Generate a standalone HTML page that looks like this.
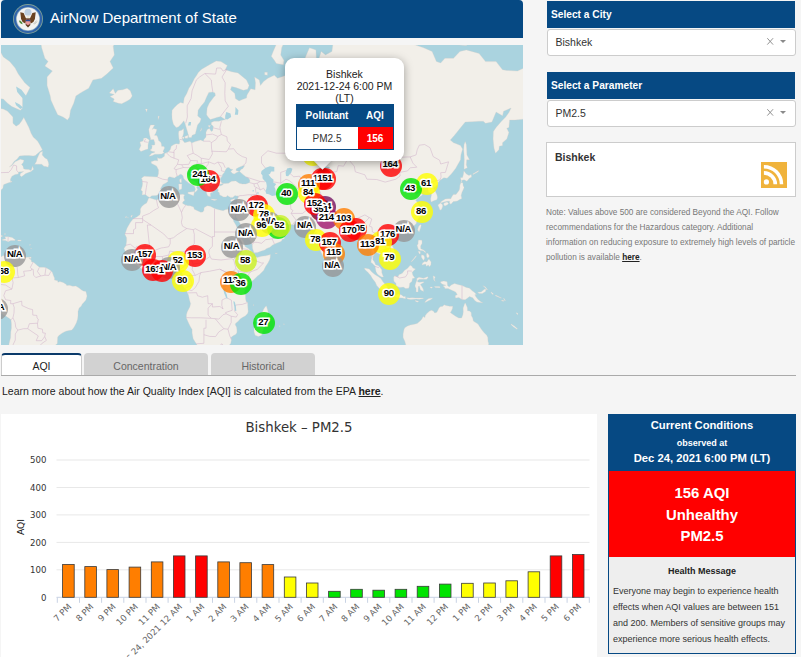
<!DOCTYPE html>
<html lang="en">
<head>
<meta charset="utf-8">
<title>AirNow Department of State</title>
<style>
*{box-sizing:border-box;margin:0;padding:0}
html,body{width:801px;height:657px;overflow:hidden;background:#f5f5f5;font-family:"Liberation Sans",Arial,sans-serif;color:#222}
.abs{position:absolute}
#hdr{left:1px;top:0;width:522px;height:37.8px;background:#064983;border-radius:4px 4px 0 0;color:#fff;font-size:15px;line-height:38px}
#hdr span{position:absolute;left:49px;top:-1px;white-space:nowrap}
#map{left:1px;top:45px;width:522px;height:300px;background:#aad3df;overflow:hidden}
.mk{position:absolute;width:22px;height:22px;border-radius:50%;opacity:.8;text-align:center;line-height:22px;font-size:9.3px;color:#000;white-space:nowrap}
.ml{position:absolute;width:40px;height:22px;text-align:center;line-height:22.5px;font-size:9.6px;font-weight:bold;color:#000;white-space:nowrap;-webkit-text-stroke:3.2px #fff;paint-order:stroke fill;letter-spacing:-0.35px}
#pop{left:285px;top:13px;width:119px;height:103px;background:#fff;border-radius:9px;box-shadow:0 2px 10px rgba(0,0,0,.35);text-align:center;font-size:10.5px;line-height:11.7px;color:#222;padding-top:11.3px}
#tip{left:315.5px;top:109px;width:13px;height:13px;background:#fff;transform:rotate(45deg);box-shadow:2px 2px 5px rgba(0,0,0,.25)}
#ptab{left:295.5px;top:59px;width:98px;height:46px;border:1px solid #064983;background:#fff;font-size:10px}
#ptab div{position:absolute;text-align:center;line-height:21px}
.bar{left:547px;width:248px;height:27px;background:#064983;color:#fff;font-size:10.2px;font-weight:bold;line-height:27px;padding-left:4px}
.sel{left:546.5px;width:249px;height:26.5px;background:#fff;border:1px solid #ccc;border-radius:3px;font-size:10.5px;line-height:25px;padding-left:8px;color:#333}
.sel .x{position:absolute;left:219px;top:8.2px;width:6.4px;height:6.8px;overflow:visible}
.sel .ar{position:absolute;left:232.4px;top:10px;width:0;height:0;border-left:3.5px solid transparent;border-right:3.5px solid transparent;border-top:3.6px solid #8a8a8a}
#city{left:546px;top:142px;width:250px;height:54.5px;background:#fff;border:1px solid #ccc;font-size:10.5px;font-weight:bold;padding:7.5px 0 0 8px;color:#333}
#rss{left:761px;top:162px;width:26px;height:26px}
#note{left:546px;top:206px;width:255px;font-size:8.25px;line-height:14.9px;color:#777;white-space:nowrap}
#note a{color:#222;font-weight:bold;text-decoration:underline}
.tab{top:353px;height:22px;font-size:10.5px;text-align:center;line-height:25px;border-radius:4px 4px 0 0}
#t1{left:1px;width:81px;background:#fff;border:1px solid #ccc;border-top:2px solid #0a3a6a;border-bottom:none;color:#222;line-height:22px;height:23px}
#t2{left:84px;width:124px;background:#d2d2d2;color:#666;line-height:27px}
#t3{left:211px;width:104px;background:#d2d2d2;color:#666;line-height:27px}
#tline{left:1px;top:375px;width:795px;height:1px;background:#aaa}
#learn{left:2px;top:385px;font-size:10.5px;color:#222;white-space:nowrap}
#learn a{color:#222;font-weight:bold;text-decoration:underline}
#chart{left:1px;top:414px;width:596.4px;height:243px;background:#fff;overflow:hidden}
#cc{left:608px;top:414px;width:188px;height:240px;background:#eee;border:1px solid #064983;text-align:center}
#cc .h{background:#064983;color:#fff;font-weight:bold;height:55.5px;font-size:11.25px;line-height:15.6px;padding-top:3.4px}
#cc .r{background:#ff0000;color:#fff;font-weight:bold;height:86.8px;font-size:14.9px;line-height:21.5px;padding-top:12.5px}
#cc .hm{font-weight:bold;font-size:9px;margin-top:8.7px;color:#222}
#cc .tx{font-size:9px;line-height:16px;text-align:left;padding:7px 0 0 4px;color:#333;white-space:nowrap}
</style>
</head>
<body>
<div id="hdr" class="abs"><span>AirNow Department of State</span>
<svg class="abs" style="left:12px;top:3.9px" width="30" height="30" viewBox="0 0 30 30">
<circle cx="15" cy="15" r="15" fill="#7d9f96"/>
<circle cx="15" cy="15" r="14.1" fill="#2f63aa"/>
<circle cx="15" cy="15" r="12" fill="#8fb0c4"/>
<circle cx="15" cy="15" r="11.3" fill="#f3f3f1"/>
<circle cx="15" cy="8.2" r="3.5" fill="#bdd0e0"/>
<path d="M7.3 8.2 L10.6 9 L12.6 13.5 L13.6 15.6 L12.2 19.6 L9.6 18 L8.1 15 Z" fill="#6a4320"/>
<path d="M22.7 8.2 L19.4 9 L17.4 13.5 L16.4 15.6 L17.8 19.6 L20.4 18 L21.9 15 Z" fill="#6a4320"/>
<path d="M13.4 14 L16.6 14 L17.4 21 L15 23.6 L12.6 21 Z" fill="#5a3a1e"/>
<circle cx="15" cy="13" r="1.5" fill="#efe9d8"/>
<path d="M12.7 15.8 H17.3 V18.6 Q17.3 20.4 15 21.2 Q12.7 20.4 12.7 18.6 Z" fill="#e27078"/>
<rect x="12.7" y="15.8" width="4.6" height="1.5" fill="#2c4c94"/>
<path d="M13.85 17.3 V20.5 M15 17.3 V21.1 M16.15 17.3 V20.5" stroke="#f6e9e9" stroke-width="0.45"/>
<path d="M6.2 16.4 Q7.4 16.2 8.2 17.6 Q9.4 18.4 9.6 20.2 Q7.8 20.2 6.9 18.8 Q6 17.6 6.2 16.4Z" fill="#4e8a3c"/>
<path d="M20.6 20 L23.6 16.6 M21.4 20.4 L24 17.6" stroke="#a9a9a0" stroke-width="0.6"/>
</svg>
</div>
<div id="map" class="abs"><div class="abs" style="left:-1px;top:0;width:523px;height:300px">
<svg class="abs" style="left:0;top:0" width="523" height="300" viewBox="0 0 523 300">
<rect width="523" height="300" fill="#aad3df"/>
<path d="M148.6 153.2L149.9 152.9L154.8 154.5L156.9 155L159.1 153.5L161.4 152.7L164.4 151.1L167.6 150.6L171.9 150.6L176.1 150L180.4 149.5L183 149.2L184.7 150L183.8 151.6L183.8 153.2L184.7 155.3L182.7 157.1L182.7 158.4L184.9 159.7L187.9 160.7L190 160.7L193.6 162L194.3 164.2L197.5 165.7L200.7 167.2L202.8 167L203.9 165.5L204.1 162.7L207.1 160.7L210.3 161.2L214.5 163.5L218.8 164.7L223.1 165.7L225.2 164.7L227.3 164.2L230.1 164.7L232.7 165.2L234.4 164.5L235.7 169.2L234.6 172.6L234.2 173.3L232.7 171.6L231.2 169.2L230.7 168L230.7 168.9L232.7 172.8L233.7 176.4L235.9 180L236.9 182.3L237.4 184.7L240.1 188.1L240.6 192.4L243.3 196.1L245 201.4L248.7 203.8L251.9 207.1L253.6 208.2L253.4 210.2L254 210.8L257.2 212.6L261.5 211.3L265.7 210.8L270.4 209.5L270.2 212.6L269.6 214.7L267.9 218L265.7 221.2L263.6 225.5L259.3 229.8L257.8 230.8L254 234.5L250.8 237.2L248.7 239.4L247 241.5L245.9 243.6L244.8 245.8L244 248.4L245.5 250.1L245.5 253.3L246.1 256.5L247.6 257.6L247.8 262L248.2 266.4L247.6 268.6L245.5 270.8L242.3 272.6L240.1 274.1L238 276.4L235.7 278.2L235.2 279.8L236.5 282.1L236.9 284.4L236.9 287.4L235.9 289.3L232.7 290.9L231 292.6L231.4 295L230.7 298.6L228.4 301L227.3 302.2L225.2 306L220.9 309.7L216 312.3L208.1 313.1L203.9 314.4L200.7 313.1L200 309.7L200.2 307.2L198.5 303.5L197 299.8L194.7 296.2L193.2 293.8L192.1 287.9L192.1 284.4L190 280.9L187.9 276.4L186.4 273L186.4 269.7L187.4 266.4L189.8 262L190.6 258.7L189.4 254.4L188.5 250.1L187.4 247.9L186.4 245.1L184.7 243.2L181.7 240L180.4 237.2L181 234.5L181.9 233L182.1 230.2L182.1 228.3L181.5 226.6L179.3 225.3L176.1 225.7L174 225.9L171.9 223.3L170.8 221.6L168.5 221.4L165.5 221.6L163.3 222.3L161.2 222.9L159.1 224L156.9 224.8L154.8 224.2L152.7 224L148.4 224.8L145.2 225.7L142 224L138.2 221.6L136.7 220.3L134.5 219.1L133 216.9L132.8 215.4L132 214.7L130.3 212.6L129.2 211.5L127.9 209.7L125.6 208.4L125.4 206.5L123.9 203.4L126 200.5L126.6 196.1L126.6 192.7L124.9 189.3L127.1 183L130.3 177.6L133 174L136.7 172.1L139.9 169.7L140.5 167L140.3 164.2L141.6 161.7L144.1 159.4L145 158.9L146.7 157.9L148 154.8ZM266.4 260.9L268.3 267.5L267.9 269.2L266.8 273L266.2 275.3L264.7 279.8L263.2 285.1L261.5 290.2L258.3 291.4L255.1 290.2L254 286.7L254 283.2L255.7 278.7L255.5 275.3L255.1 271.9L256.8 270.1L260 269L262.5 267L263.6 264.2L265.3 261.8ZM149.7 152.4L147.8 151.4L145.4 149.5L142.2 150L142.4 146L140.9 145.2L142.2 141.3L142.6 138.5L142.2 134.8L141.4 133.3L144.1 131.2L148.4 131.5L153.1 131.8L157.4 132.1L158.4 128.9L158.6 124.9L156.5 120.9L151.6 118.4L151 116.8L154.8 115.5L157.8 115.8L157.4 112.6L158.9 113.5L161.6 113.2L164.4 111.2L164.6 108.5L168 107.2L170.2 104.8L171.2 101.3L174 99.5L176.1 98.8L179.3 99.1L179.8 96.6L178.9 93.3L178.5 88.3L178.9 86L181.7 85.2L183.6 83.6L183.6 88.3L183 90.6L181.9 92.9L182.5 95.1L184.7 97.7L187.2 97L190 96.2L191.7 98.1L195.3 96.6L200.7 95.1L203.4 96.2L203.9 94.4L206 92.1L206 87.2L207.3 84.4L209.4 83.6L211.3 86.4L212.8 85.6L213.3 81.2L211.3 79.6L211.3 77.5L214.1 76.2L218.8 76.2L221.4 75.4L225.6 74.6L223.1 73.3L220.9 71.5L216.7 72.4L214.5 73.3L210.3 74.6L208.1 72L206.6 69.8L207.1 63L209.2 58.3L213.5 52.5L215.4 50.5L215 47.9L212.8 46.9L208.8 47.4L206.6 52L204.5 56.9L200.7 61.6L198.1 65.3L197.7 71.1L201.1 73.7L200 77.1L197.5 80L196.4 84.4L195.3 89.1L192.1 90.3L191.5 92.5L188.7 92.5L188.3 89.5L186.8 84.4L185.1 78.7L183.8 75.8L181.5 78.7L178.3 82L176.1 82.4L173.4 79.2L172.1 74.1L171.9 69.8L172.1 65.3L174.4 62.6L177.2 59.8L180.4 57.4L183.4 58.3L184.2 53L186.8 48.4L188.9 43.2L191.9 38.8L194.3 33.7L196.4 30.8L198.5 27.3L201.7 24.2L206 21.7L210.3 19.2L216.2 15.9L220.9 16.6L227.3 20.5L225.2 24.8L231.6 26.7L238 27.9L246.5 34.9L249.1 40.5L247.6 44.2L243.3 45.3L235.9 42.6L231.6 41.6L230.5 44.8L234.8 48.4L235.4 53.5L239.1 55.9L242.3 54.5L246.5 53L247 50L250.8 43.7L255.1 44.8L255.5 37.7L254.6 32L259.3 34.9L260.4 40.5L263.6 36.6L267.9 33.2L274.3 30.3L277.5 33.2L282.8 31.4L289.2 29.1L290.3 24.2L297.7 27.3L302 29.1L306.3 32L304.1 26.1L303.7 16.6L307.3 7.8L309.5 2.8L315.9 4.9L316.5 16.6L314.8 29.1L318 37.7L314.8 44.2L319.1 38.8L320.8 29.1L318 16.6L321.2 6.4L325.5 9.9L331.9 6.4L333.1 -1.7L344.7 -4.7L374.5 -25.7L383.1 -37.2L395.9 -27.6L402.3 -12.7L403.3 -0.9L412.9 -0.9L423.6 2.8L432.1 6.4L436.4 16.6L440.7 17.9L444.9 13.3L453.5 13.3L459.9 6.4L466.3 4.9L479.1 8.5L485.5 16.6L496.1 16.6L502.5 24.8L506.8 25.4L517.5 26.1L523.9 23L526 29.1L545.2 29.1L545.2 65.3L523.9 74.1L515.3 75L509.6 75L508.9 82.4L506.8 83.2L508.9 87.6L506.8 94L502.5 97.7L502.5 100.6L499.3 101.3L498.9 104.8L495.5 108.2L494 103L493.1 94L493.4 86.4L496.1 82.4L501.5 76.2L505.7 72L508.9 67.6L511.1 63L503.6 66.2L502.5 70.7L496.1 67.1L491.9 77.1L485.5 78.3L483.3 76.2L479.1 76.2L471.6 76.7L465.2 77.1L459.9 83.6L454.5 90.3L450.3 95.1L453.5 97.7L455.6 98.4L460.5 100.6L462.6 104.1L460.9 109.9L460.5 114.8L457.7 119.7L455.6 123.4L451.3 128.9L447.1 133.3L443.9 132.7L440 135.3L438.1 137.6L437.9 139.6L435.3 141.8L433.2 143.2L435.1 145.7L437 150L437.5 152.7L436.8 154.8L434.3 155.6L431.1 156.9L430.6 154L431.3 150.6L431.5 148.2L428.5 147.3L427.9 143.2L426.6 141.8L422.5 143.2L420 144.9L421.5 140.5L419.3 139.3L416.1 142.4L412.9 144.1L412.3 146L414.6 147.9L416.1 149.5L418.9 147.9L422.5 149L422.1 150.3L418.3 152.4L415.7 155.3L417.8 157.9L419.1 161L421 163.5L421.3 165.7L419.3 166.7L421.5 168.2L420.6 171.6L418.7 172.8L416.8 176.4L416.1 178.8L414 180.7L412.9 181.4L410.8 183.5L408.7 184.9L405 186L403.3 186.5L400.1 187.7L396.9 188.8L396.5 190.9L395.4 188.3L392.7 187.7L390.5 188.6L389 189.9L386.9 192.7L386.9 194.5L388.4 196.7L390.5 199.2L392.2 200.3L393.7 203.8L394.4 207.1L394.2 209.7L392 211.5L389.5 212.8L388.8 214.5L385.6 216.5L384.8 214.1L384.1 212.8L382.2 212.4L380.7 210L379.2 208.7L376.7 207.8L376.5 206.2L375.6 206L374.5 206.5L374.3 209.3L373 211.5L372.8 214.7L374.5 216.9L375.6 219.7L378.2 220.6L379.9 222.3L381.8 224.8L381.8 227.6L382.6 229.8L383.5 232.1L381.6 231.9L378.8 230.2L377.3 228.9L376 226.6L375.4 223.3L375.2 221.2L373.9 220.1L372 218L370.9 217.5L371.3 214.7L371.5 212.6L371.8 209.3L370.7 206L369.8 202.7L369.4 199.4L367.7 198.3L366 199.4L364.5 201L362.4 200.5L362.8 197.2L362.4 194.5L360.9 192L359.2 191.1L357.9 189.3L357 186.3L354.9 185.8L353.8 187.2L351.1 187.4L349.4 187.7L346.8 188.1L346.6 189.7L345.3 191.5L343.2 192.2L340.4 194.9L338.9 196.7L336.8 199L334.4 200.7L332.3 201.6L332.1 204.9L332.5 206.9L331.7 209.3L331.4 213L330.2 213.2L329.7 215.2L328 216L326.5 217.8L325 216.5L324 213.9L322.9 210.8L321 207.3L319.7 203.8L318.6 201.6L317.6 198.3L316.7 194L316.3 191.5L316.5 189L316.1 186.5L315.2 188.1L312.7 189.7L311.2 189.3L308.4 186.3L310.5 185.6L311.2 184.7L308 184L306.7 183L305 181.6L304.1 180.5L303.3 179.3L298.8 179.5L294.1 179.8L292.4 179.8L287.1 179L283.4 178.1L282.4 175L278.5 176L275.3 175.7L273.2 173.8L271.1 173.1L269.6 170.7L268.3 168L265.7 167L264.7 168L263.6 168.4L263.6 169.7L264.9 172.1L266.8 174.5L268.1 176.2L268.3 178.3L269.6 180.5L270.4 178.8L270.6 177.4L271.3 179.5L270.9 180.9L273.2 181.9L276.4 182.1L277.5 181.2L279.2 179.3L280.9 177.4L281.5 176.9L281.5 180L282.2 181.6L284.9 183L286.2 183.3L288.8 185.8L287.1 188.8L286.2 190.6L284.5 191.1L284.3 193.8L282.4 194.3L281.3 196.3L279 197.2L276.4 198.3L272.6 200.1L270 202.3L266.8 203.4L264.7 204.9L261.5 206L257.4 207.6L254.2 207.8L253.4 206L252.5 203.2L252.3 200.1L251.4 197.6L249.3 194.5L247.6 192L245.7 189.7L244.6 188.1L244 184.7L241.8 181.9L240.3 178.8L238.4 175.7L236.7 172.8L235.7 172.6L235.8 169.2L234.4 164.5L235.2 162.7L235.9 161L236.9 158.1L237.6 154L238 152.7L238.4 150.8L236.9 151.1L235 150.6L232.7 152.4L230.5 152.4L227.3 150.6L226.3 151.9L223.5 151.9L221.4 150.8L219.7 150L219.2 147.6L217.7 146.5L218.4 144.9L217.1 143.2L217.1 141.8L218.8 140.7L220.9 140.7L223.1 139.6L223.3 138.5L225.2 138.5L228.4 138.2L231.6 136.2L235.9 135.9L239.1 138.2L242.3 139L245.9 139L249.7 137.6L249.9 135.3L248.7 133.3L245.5 131.5L242.3 128.9L240.8 127.4L239.5 126.5L241.2 124.3L242.7 123.7L244.8 120.6L242.3 120.9L239.1 122.2L236.3 123.7L235.9 125.5L239.1 126.5L236.7 127.4L234.2 128.9L232.7 128.6L230.7 126.5L232.9 124.6L230.5 124L229 122.5L226.9 122.8L224.8 125.9L224.3 127.4L222.4 129.8L222 131.8L220.7 132.7L220.3 134.8L220.9 136.2L221.4 137.6L223.1 138.5L220.9 139L219.4 139.6L218.2 140.7L216.9 140.2L216.7 139.3L214.5 139.3L212.4 139.6L212 141.3L210.1 140.5L209.4 141.8L210.3 144.1L210.9 145.4L212.4 146.8L212.4 148.2L211.1 147.6L210.3 148.7L210.7 151.4L209 151.4L207.5 150.6L206.6 148.2L206.4 146.5L205.6 144.9L204.3 143L202.6 140.7L202.6 137.6L201.7 135.6L200 134.5L196.4 131.8L193.6 129.8L192.8 127.1L191.7 126.5L190.6 127.7L190.2 125.5L187.7 126.2L187.4 128.9L190 131.5L191.7 135L195.3 136.5L197 138.5L200.7 141.6L200.7 142.4L197.7 140.5L196.6 142.4L197.7 144.6L196.4 146.3L194.7 147.5L194.9 145.4L195.5 144.3L194.5 141.6L192.8 140.2L191.5 139.6L188.9 138.2L187.2 136.8L184.7 134.8L183.6 133.3L183 130.7L181.5 129.5L180.2 129.2L178.3 130.7L176.8 131.2L174.4 133L172.5 132.4L169.7 131.8L168 132.7L167.8 135L168 136.5L165.9 137.9L162.9 139.6L161.2 142.4L160.6 143.5L161.6 145.4L160.1 146.5L159.5 148.4L157.4 150L156.3 150.6L151.8 150.8ZM149 111.2L152.2 110.6L154.8 109.2L158 109.2L161.8 109.1L164.2 107.5L162.9 106.5L164.6 103L164 101.6L161.6 101.3L161.4 99.1L160.8 97.3L158.6 95.5L157.8 92.5L156.9 90.6L154.4 90.3L155.7 88.3L156.9 84.4L153.7 83.6L152.2 84.4L154.6 80L150.5 80L148.8 84.4L149.3 88.3L149.9 91L150.7 94L150.3 94.8L153.7 94.4L154.8 97.7L154.8 99.9L151.6 100.2L152.2 101.6L151.6 104.1L149.9 105.1L152 106.2L154.8 106.8L154.4 107.5L151.6 108.2ZM148 100.2L148 104.1L145.2 104.8L140.9 106.5L139.2 104.4L140.9 100.6L139.9 97L143.1 95.9L143.7 93.3L146.3 92.9L149.3 95.1L148.4 97.7ZM113.2 56.4L118.5 58.3L121.7 58.8L127.1 55.9L130.3 54L132.2 51L130.3 45.8L127.1 43.2L122.8 44.8L117.9 45.3L115.3 48.4L113.2 43.7L109.4 47.9L114.3 49.4L110 51.5L114.3 54ZM37.5 -21.3L41.7 2.8L44.9 13.3L48.1 16.6L44.9 21.1L52.4 26.1L47.1 32L47.1 40.5L50.3 51L50.9 54.9L54.5 63L57.7 69.8L63.1 72L67.5 75L69.5 72L70.5 65.3L73.7 58.3L75.9 51L81.2 47.4L88.7 43.2L92.9 34.9L101.5 33.2L106.8 29.1L113.2 23L110 16.6L114.3 9.9L113.2 1.3L118.5 -8.7L120.7 -40.3L75.9 -90.1L33.2 -62.7ZM-20.1 -4.7L-9.5 -2.4L-0.9 4.2L3.3 11.9L9.7 16.6L15.1 23L18.3 29.1L24.7 37.7L30 42.6L25.7 51L22.5 53.5L22.5 63L20.4 65.3L11.9 61.6L7.6 58.3L3.3 54L-5.2 53.5L-20.1 45.8ZM-20.1 63L-3.1 63L3.3 64L7.6 66.2L10.8 69.8L12.9 72L12.9 78.3L16.1 81.2L19.3 79.2L21.5 76.2L23.8 72.4L28.9 82.4L31.1 88.3L33.2 92.1L37.5 95.9L39.6 99.5L42.4 104.8L39.6 106.8L35.3 110.6L33.2 110.9L28.9 110.6L24.7 110.6L19.5 110.9L17.2 113.9L14 116.5L11.9 119.7L9.3 121.9L11.9 120.6L15.1 116.8L20.4 114.2L24 115.2L23 118.1L21.5 119.3L23 121.2L23.6 123.7L25.1 124.3L28.9 124.6L31.1 125.5L32.6 121.2L33.6 124.3L31.1 126.5L25.7 128.6L21.5 131.8L20 130.4L20.4 128.6L23.6 126.5L21.5 126.8L18.3 127.1L18.3 128.9L15.1 129.5L11.9 131.2L10.4 134.2L10.6 136.5L11.9 136.2L11.9 137.1L9.1 137.6L6.5 138.5L3.8 139.6L3.3 140.7L2.9 143.2L1.4 144.6L0.8 146L-0.1 148.7L-0.9 150.3L0.1 154.5L-2 156.1L-20.1 168ZM42.6 106.2L42.2 109.9L44.9 112.9L47.1 114.2L48.1 116.5L48.8 119.3L48.1 122.2L46 121.5L43.9 121.2L41.7 119.3L38.5 119.3L34.7 119.3L36.4 116.5L37 113.9L38.5 110.6L40 107.5ZM-30.8 211.9L0.1 212.8L1.6 211.5L2.9 210.8L5.5 210.4L7.2 208.9L8.2 208.4L9.1 209.7L7.8 211.1L8.7 211.7L11.4 210.2L11.9 208.9L12.7 210.4L15.5 211.5L16.1 212.6L20.4 212.4L22.5 213.4L24.7 212.6L28.9 212.1L29.1 213.7L31.1 214.7L31.5 216.7L33.6 217.3L36.4 219.7L37.5 220.8L39.6 222.3L43.9 222.3L46 222.7L49.2 224.4L51.1 225.9L52.4 227.6L53.5 230.8L54.5 233L54.5 235.1L57.7 235.7L57.9 237.2L59.9 236.6L63.1 237.4L66.3 239.4L66.7 240.6L69.5 240.2L72.7 241.3L75.9 241.1L79.1 243L81.6 245.1L83.3 246L85.9 246.4L86.5 249L87 251.1L86.7 252.2L85.9 255L83.8 257.4L82.3 259.1L81.2 261.3L79.1 263.1L78 266.4L78 270.8L77.6 274.1L76.5 277.5L75.4 279.8L73.7 282.8L71.8 285.1L69 285.5L65.8 286.2L62.4 287.9L59.2 290.2L57.7 292.1L57.5 295L57.3 298.6L55 300.5L53.5 303.5L53.5 328.4L8.5 328.4L8.5 309.7L8.7 302.2L9.1 298.6L10.6 292.6L10.8 286.9L11.4 283.2L11.4 278.7L11 274.8L9.1 273.3L6.5 271.5L3.3 269.7L0.8 268.4L-1.4 264.8L-3.5 260.9L-5.2 257.6L-7.3 252.7L-30.8 252.2ZM2.3 195.2L5.5 195.6L8.2 196.7L10.8 195.4L14.9 195.6L15.3 194.7L12.1 192.4L8.2 191.8L4.8 191.8L5.9 193.8L2.5 194.5ZM17.8 194.9L21.3 195.2L20.8 196.1L17.8 196.1ZM29.1 212.1L31.1 211.9L31.1 213.4L29.1 213.4ZM-5.2 189.3L-3.1 189.7L0.1 189.9L2.9 191.1L1.2 191.8L-4.1 191.8L-5.2 190.4ZM-5.8 195.2L-1.6 195.6L-1.6 196.3L-5.8 195.8ZM331.9 214.1L334.4 216.9L335.9 219.5L335.1 221.4L332.9 222.5L331.7 221.2L331.4 218ZM437.9 159.9L440.5 158.1L442.2 159.2L442.8 161L441.7 164.2L440 165.2L439 162.5ZM440.7 157.9L443.9 157.1L447.1 156.3L449.6 156.3L449.4 158.1L450.9 159.2L453.3 156.6L456 156.3L457.3 156.1L459.2 154.8L461.8 153.5L461.1 150.6L462 147.3L463.3 144.6L464.1 142.4L463.1 140.5L462.9 137.9L461.6 137.6L460.5 138.5L459.9 140.5L459.7 143.2L459.2 145.2L457.7 147.3L456 149.5L453.5 149.5L454.1 148.7L452.8 150.3L451.5 152.2L450.9 153.7L448.1 153.7L445.4 154L442.8 155.6L440.7 156.9ZM443.9 158.1L447.1 157.1L448.6 158.4L447.5 159.7L444.9 161L443.7 159.7ZM460.5 137.6L462 136.8L460.9 134.8L460.5 132.7L462.6 132.4L463.5 128.9L463.9 125.9L466.3 128.9L469 130.4L471.2 129.5L471.6 132.1L469.3 133.3L466.9 136.2L464.1 134.8L462 135.3ZM464.1 124.3L467.3 122.8L466.3 119.7L466.7 114.8L469.5 114.8L466.9 109.9L466.7 104.8L466.3 99.5L465.2 96.6L464.1 99.5L463.7 104.8L464.1 109.9L464.3 114.8L464.1 119.7ZM420.4 179.5L421.3 180.5L420.4 183.5L419.1 187L417.6 184.7L418.7 181.2ZM396.5 191.5L398 192.2L396.9 194.5L394.8 195.6L393.1 194.3L393.7 192ZM418.5 194.9L421.9 195.2L422.1 198.3L420.6 201L420.8 203.8L423.6 204.9L425.7 207.1L425.3 207.8L423.2 205.8L420.4 205.6L418.5 204.5L417.8 202.7L417 200.1L418.1 199.2L418.1 196.9ZM428.9 214.1L431.1 216.9L430.9 220.1L429.1 221.8L428.5 220.1L426.2 221.2L425.7 219.1L421.9 220.1L422.5 218L424.7 216.5L426.8 216.9ZM427.9 208.2L429.4 211.1L427.9 213.2L426.6 211.5L426.4 208.4ZM421.5 209.7L424 210.4L424.7 213L423.6 215.4L422.3 213.7L421.3 211.9ZM411.2 217.1L412.9 215.4L415.5 212.6L416.6 210.8L415.7 211.1L413.6 213.7L411.2 216.5ZM418.1 206.2L420.2 206.5L420.4 208.4L419.3 208.9ZM393.7 231.9L395 230.8L398 231.9L398.9 229.8L402.3 228.3L404.4 225.5L407.6 223.3L410.2 220.3L411.9 221.2L412.9 222.9L415.5 224L413.4 225.9L412.1 227.6L412.9 230.2L414.9 233L412.5 233.6L411.9 236.6L409.7 238.3L409.3 241.5L408.7 243.2L405.7 243.6L403.3 242.1L399.7 242.4L396.3 241.1L395.9 238.3L393.9 236.2L393.7 234ZM364.5 223.1L369.2 224L371.8 227L375.2 229.8L377.7 231.3L380.9 233.6L382.6 236.2L384.1 238.3L387.3 241.5L387.1 244.7L386.9 247.5L384.3 247.5L382 245.4L379.4 243.4L376.7 240.4L375.2 237L372.4 233.6L370.7 230.4L368.1 227.6L364.9 224.4ZM385.6 249.6L387.5 247.7L389.5 247.7L392.7 249L396.9 249.9L398 248.8L401.6 249.9L403.3 251.4L405.5 251.6L405.5 253.7L402.3 252.9L398 252.7L393.7 251.6L390.5 251.6L388.2 250.7ZM406.5 252.7L409.7 252.9L411.9 252.7L415.1 252.9L418.3 252.9L423.2 252.9L423.6 253.5L419.3 254.2L416.1 253.9L410.8 254.4L407.6 253.9ZM424.7 257.2L426.8 254.8L428.9 253.5L432.6 253.1L431.1 254.4L427.9 256.1L425.7 257.2ZM415.1 255.5L418.9 256.3L417.2 257.2L415.1 256.1ZM416.8 233.4L418.9 232.3L423.6 233.2L427.4 231.7L428.3 232.1L426.8 234.2L423.6 234.2L419.3 234.2L417.6 235.5L417.6 237L419.8 237.2L423.2 236.8L424.2 237.2L421.5 238.7L420.4 239.4L422.1 242.1L423.2 244.1L423.6 246.4L422.1 245.8L420.4 244.7L419.3 241.1L418.3 241.5L418.1 245.4L418.1 246.9L416.1 246.9L416.1 243.6L414.9 241.1L415.7 238.3L416.8 235.5ZM433.2 230.8L435.3 231.9L434.3 234L435.3 236.6L433.8 235.1L433.4 233ZM434.3 241.5L439.6 241.5L440.2 242.8L435.3 242.6ZM430.2 241.9L432.6 242.1L431.7 243.2L430.2 242.8ZM440.7 236.8L443.9 236L447.1 236.8L447.5 240.4L449.2 242.1L451.3 240L454.5 238.5L457.7 239.4L462 240.6L466.3 242.4L469.5 243.2L472.2 245.8L474.8 247.7L476.5 249.4L474.8 249.6L475.9 251.8L478 254.4L481.2 257L482.9 257.8L480.1 257.4L476.9 257L474.8 255.5L472.7 252.7L469.5 251.6L467.3 253.3L465.2 254.8L462 254.6L458.8 252.4L455.6 253.1L455.2 250.7L457.3 249.6L455.6 246.9L451.3 244.9L448.1 243.6L444.9 243.6L444.5 242.1L442.8 241.1L446 240.2L443.2 239.6L440.7 238.1ZM477.6 247.3L481.2 246.9L484.4 244.3L486.1 244.3L485.5 246.4L482.3 248.4L479.1 248.6ZM482.9 240.6L485.5 242.1L487.6 244.7L487 244.9L484.4 242.1ZM491.2 246.9L493.6 249L492.5 249.6L491 247.7ZM495.7 250.1L501.5 252.9L501 253.3L495.3 250.7ZM501.7 255L504.2 255.7L503.8 256.3L501.7 255.9ZM503.8 253.1L505.5 255.5L504.9 255.7L503.6 253.7ZM511.1 278.9L514.3 280.9L517.5 283.7L517 284.2L513.6 282.1L510.9 279.6ZM516.6 267.5L518.1 268.8L517.7 269.7L516.4 268.4ZM406.5 302.2L404.8 296.2L403.1 292.6L403.1 289L404 284.4L404.8 282.8L407.6 280.9L410.4 280L414.2 279.3L417.2 278.4L420.4 275.7L421.9 273.9L423.2 271.5L424.9 272.6L425.3 270.4L426.8 268.4L429.6 266.1L431.7 265.3L433.8 266.4L434.7 267.9L436.8 267.3L437.9 265.3L439 262.9L440.2 261.8L442.8 261.3L444.1 259.8L446 260.5L449.6 261.3L452.8 261.3L452.4 263.7L451.1 266.4L450.3 267.5L453 269.5L456 271.5L458.8 273L461.6 273L462.9 269.7L463.3 266.4L463.1 263.1L463.9 260.9L464.6 258.7L465.4 258.1L466.1 259.8L467.3 262.6L467.5 265.7L469.5 265.9L471.2 267.5L471.4 270.8L472.7 273L473.3 275.9L474.8 277.1L478 279.1L479.5 281.4L481.2 283.9L482.9 286.2L484.4 287.9L486.7 290.2L487.8 292.6L488 296.2L488.7 298.6L488.2 302.2L488.2 317.5L406.5 317.5ZM274.3 15.3L276.4 18.5L283.4 19.8L283.9 15.3L280.7 9.9L281.7 2.8L284.9 -4.7L289.2 -12.7L306.3 -30.4L289.2 -30.4L280.7 -12.7L276.4 -0.9L273.2 6.4L271.3 11.2ZM264.7 27.3L267.4 27.3L267.4 30.3L264.7 29.7ZM211.3 154L214.5 154.3L217.3 154.8L214.5 155.4L211.5 154.8ZM230.1 155.3L231.6 154.5L235 153.5L233.7 155.6L231.6 156.3ZM187.9 147.3L194.5 146.5L193.6 150.8L187.9 148.4ZM178.7 139L181.9 139L181.7 144.1L179.1 144.9ZM179.5 134.8L181.3 133.3L181.5 137.6L180 137.6ZM166.3 143L168.5 142.4L167.8 143.8ZM274.9 208L277.5 208.2L276 208.7ZM184.7 91.4L188.1 90.3L187.7 93.3L185.1 93.3ZM182.1 92.1L184.2 92.1L184 93.8L182.5 93.6ZM200 86.4L201.7 82.8L201.3 85.2ZM208.1 80.4L210.7 80.4L209.2 82.4ZM453.5 -16.9L470.5 -21.3L481.2 -14.4L466.3 0.6L457.7 -0.2ZM472.7 128.9L478.6 125.5L478.2 126.8L473.1 129.5ZM125.1 171.9L126.9 171.4L126 172.8ZM127.5 172.6L128.3 172.6L128.1 173.3ZM130.7 171.1L132.4 169.9L131.5 172.4ZM279.2 280.7L280.2 280.9L279.8 281.7ZM283.7 278.7L284.5 279.1L283.9 279.8ZM253.4 259.6L254 260L253.6 260.7ZM244.8 247.5L245.5 247.9L245.3 248.8ZM29.4 199.8L30.6 199.6L30 200.5ZM30.6 203.2L31.5 203.4L31.1 204.1ZM145.4 64L147.3 64L146.7 67.1ZM158 71.1L159.3 71.5L158.4 74.6ZM4 189L5.5 188.6L5.3 189.5Z" fill="#f2efe9" stroke="#d9d0c9" stroke-width="0.3"/>
<path d="M185.7 78.3L187.4 72L187.2 67.6L187.2 60.7L191.1 53.5L192.1 45.8L196.4 34.9L199.6 32L203.9 29.1L204.9 28.5M212.8 46.9L211.8 40.5L211.3 34.9L204.9 28.5L215.6 29.1L216.7 23L220.9 23L223.1 26.1L226.9 24.2M220.5 71.5L225.2 65.3L228.4 61.2L225.2 55.9L224.8 48.4L225.2 37.7L222 32L226.9 24.2M221.4 76.2L219.9 82.4L220.3 85.2L221.4 89.5L226.9 91.8L227.3 95.9L230.5 99.5L228.4 104.1L233.7 103.7L236.9 108.2L242.3 111.6L246.5 112.9L245.9 118.1L242.7 120.9M191.7 98.1L192.3 103L193.2 108.2L187.2 110.6L190.6 115.5M193.2 108.2L197.5 110.6L201.3 113.2L209.2 114.5L212.4 108.9L211.5 103L211.3 97.7L209.8 96.2L203.4 96.2M211.3 97.7L216.2 94.4L217.9 91.4L221.4 89.5M206 89.9L212.4 89.1L217.9 91.4M213 82.8L219.7 84.4M211.5 106.2L218.8 106.5L226.3 106.8L228.4 104.1M157.4 132.1L162.7 134.2L168 135M166.5 107.9L170.2 111.6L174 113.2L178.7 114.8L177.4 119.3M174 123.7L176.1 124.6L179.3 123.7L183.4 122.5L181.7 119.7L177.4 119.3L174 123.7M177.2 131L176.1 127.4L176.1 124.6M176.6 100.2L176.1 104.1L174 105.5L174 108.9L174 113.2M168.5 106.8L174 107.5M181.7 119.7L188.9 119.3L190.6 115.5L197.5 115.8L196.4 121.2L190.4 122.8L183.4 122.5M197.5 118.1L201.3 118.7L208.6 116.8L208.1 119.3L204.5 123.7L201.3 124.6L196.4 122.8M201.3 113.2L201.3 118.7M208.6 116.8L214.3 119L217.9 117.1L221.4 122.8L221.4 125.9L224.3 126.5M217.9 117.1L223.1 118.1L225.2 122.8M222.2 131.2L218.8 130.1L209.6 129.8L206.9 127.7L204.5 123.7M209.6 129.8L209 135.3L210.1 138.2L217.3 137.1L220.9 136.2M217.3 137.1L216.7 139.9M210.1 138.2L205.8 139.3L203.9 142.7M209 135.3L204.9 135.6L202.6 136.5M201.3 124.6L201.7 127.7L202.6 131.8L200.7 134.8M190.4 122.8L190.2 125.5M196.4 122.8L194.5 124.9L190.6 125.9M201.3 124.6L195.3 126.8L194.9 129.8L198.7 133.3M142.2 136.5L147.3 137.1L146.3 142.7L145.6 147.3L145.4 149.5M179.8 94.4L182.3 94.8M145.6 94L144.1 96.6L147.8 97.3M265.7 123.4L261.5 118.1L261.5 111.6L267.9 105.8L276.4 108.2L284.9 108.2L291.3 108.9L291.3 99.5L299.9 96.6L308.4 92.9L312.7 97L319.1 98.8L325.5 100.2L331.9 108.2L338.3 108.2L343.6 112.9L347.4 114.5M347.4 114.5L343.6 121.2L338.3 120.6L336.8 126.5L332.5 127.4L332.3 135.6L325.5 139L318.6 143L321 149.5M347.4 114.5L357.5 108.9L370.3 110.6L371.3 104.8L379.4 107.2L389.5 112.2L395.9 114.2L402.3 112.2L410.2 111.9M348.5 114.5L354.3 121.2L355.3 126.8L364.9 129.8L366.9 134.2L376.7 134.5L385.2 137.1L395.9 134.2L400.1 131L399.7 127.4L407.6 125.9L410.2 122.8L416.8 122.2L412.9 118.1L410.2 111.9M410.2 111.9L416.1 109.9L417.2 104.8L419.3 100.2L424.7 99.5L430 102.7L433.2 111.6L439.6 115.2L440.7 119L448.6 116.8L445.4 127.4L440.7 127.7L441.1 132.1L439.8 135L434.3 136.2L431.9 136.8L426.6 141.8M431.5 147.9L435.1 145.7M391.6 188.1L388.8 185.1L385.8 184L380.9 185.8L379.2 186L377.1 188.8L375 188.1L372.4 187L372 182.1L369.4 181.2L371.8 174L369 172.4M369 172.4L364.9 169.9L357.5 173.3L351.1 174.5L350.6 172.8L342.5 171.6L334 167.5L329.7 165L329.3 161.7L327.6 154L321.2 150M306.7 183L312.7 181.2L310.5 173.3L316.9 168L320.1 165.5L320.1 160.5L321.2 150M331.9 170.9L340.4 174.3L348.9 176.4L350.6 181.6L351.1 187.4M357.9 189.3L358.1 183.5L355.8 182.3L358.1 180L352.8 179.3L350 176.7M358.1 188.6L360.2 184.7L363.2 178.8L368.1 174L369 172.4M371.5 213.7L372.8 209.7L370.7 202.7L371.8 199.8L369.6 194.9L374.7 190.9L377.1 188.8M374.7 190.9L375.6 192.7L377.1 196.9L378.8 196.1L383.1 195.4L384.6 199.4L386.5 203.8L379.9 205.8L380.7 210M379.2 186L383.1 190.6L384.6 194L388.4 199L390.5 203.2L390.5 208.7L387.3 210.6L384.1 212.8M386.5 203.8L390.5 203.2M374.7 221.2L378.4 222.7L379 221.8M395 230.8L399.7 233L405.5 231.9L407.6 228.7L407.6 225.9L411.9 226.1M462 240.6L462 254.6M291.8 153.7L290.5 157.9L290.9 164.2L293 165.5L291.1 168.4L296.2 175.2L292.6 179.5M291.1 168.4L302.6 168.4L309 163.2L310.5 159.7L313.1 156.1L313.9 151.6L321 149.5M291.8 153.7L298.8 151.4L303.1 149L306.3 150L310.5 148.4L313.7 150.8L321 149.5M276.2 149.2L283.2 146.8L287.7 148.7L291.8 151.1L291.8 153.7M264.7 168L263 165.5L259.3 160.5L258.3 156.6L259.3 153.2L256.8 149.5L255.7 146.3L255.5 143.5L256.8 142.7L260.4 144.9L263.6 143.2L265.5 146.3M238 152.7L239.5 150.6L242.3 150.6L248 149.8L251.7 149.8L256.8 149.5M251.7 149.8L249.1 155.8L244 159.4L244.8 162.5L247.4 163.2L250.8 165.2L256.6 169.9L260.4 170.2L263 171.6L264.5 171.6M244.8 162.5L240.1 164.2L242.3 166.7L241.2 168L238 169.9L235.9 169.4M235.9 169.2L236.9 164.2L237.1 161.2L239.7 162.2L244 159.4M237.1 161.2L237.8 159.7L239.3 157.4L238 156.3M234.4 164.7L235.7 169.2M252.5 199.6L253.6 197.2L257.6 197.4L261.5 198.3L265.7 194.7L272.1 193.8L278.5 191.5L279.8 187L279 185.4L273.4 184.9L271.3 181.6M279 185.4L280.7 182.1L281.5 180.2M272.1 193.8L274.5 199.2M273.2 136.8L280.7 138.2L280.7 127.4L286.2 125.5L291.3 129.5L293.5 131.8L299.7 131.2L302 136.2L303.1 138.8L306.3 139L310.5 136.2L312.7 135.3L318 134.8L320.6 132.7L332.3 135.6M280.7 138.2L286 134.2L289.2 135.6L293.3 138.8L298.8 144.9L303.1 149M306.3 139L311.6 141.3L318.6 143M306.3 150L305.8 144.1L311.6 141.3M246.5 132.1L252.9 134.2L260.2 136.5L264.9 136.8M249.7 137.6L254 138.8L257.2 138.2L260.2 136.5M254 138.8L254.4 141.6L256.8 142.7M257.2 138.2L260.4 144.9M156.5 155L157.6 160.5L158.6 162.7L153.3 165.7L149.5 168.4L142.6 171.1L142.6 174.5L151 180L163.8 189L168.2 193.8L170.2 193.6L173.6 192.7L177.2 189.7L186.8 183.5M142.6 173.6L133 173.6M142.6 174.5L142.6 177.6L135.6 177.6L135.6 183.5L133.5 184.7L133.5 188.6L124.9 188.6M151 180L147.3 180L149.3 199.4L149.9 201.6L141.4 201.8L138.4 201.8L136.7 201.4L135.2 203.2L136.9 208.4L142 208.4L144.1 213.2L149.5 212.8M186.8 183.5L182.5 181.2L181.3 177.2L182.3 172.8L181.5 167.5L178.9 161.7L177.2 158.4L178.9 155.3L179.5 150.3M181.5 167.5L183.2 163.7L185.7 160.2M214.5 164L214.5 187L239.9 187M186.8 183.5L193.2 184.7L195.3 183.7L212.4 192.7L212.4 191.5L214.5 191.5L214.5 187M212.4 192.7L212.4 201.2L209.2 204.9L208.8 207.8L210.1 211.5L211.5 214.1L220.9 215L231.6 213.7L233.7 214.7M193.2 184.7L194.3 189.3L194.3 198.5L190 204.1L190.2 205.6L182.5 206.7L176.1 207.1L169.7 206L168.9 210L167 221.4M170.2 193.6L170.2 198.7L168.7 201.8L163.3 202.7L161.6 202.9L156.9 204.5L152.7 206.7L149.5 212.8L155.4 214.7M155.4 224.2L155.2 214.7L155.4 211.5L162.3 211.5L168.9 210M163.8 222.1L162.3 211.5M125.6 200.3L130.3 199.2L135.2 203.2M125.6 208.4L132 208L136.9 208.4M129.2 211.5L132 210L132 208M132.8 215.8L138.4 213.7L139.2 216.9L136.7 220.3M139.2 216.9L143.1 218.8L145.2 225.7M143.1 218.8L144.8 213.7L149.5 212.8M179.5 225.1L184.7 221L190 213.7L192.1 208.2L190.2 205.6M192.1 208.2L193.2 213.7L191.1 214.1L193.2 219.1L200.7 218L210.1 211.5M193.2 219.1L192.1 224.4L195.3 230.4L189.6 230.4L185.3 230.2L182.1 230.2M182.1 233L185.3 233L185.3 230.2M189.6 230.4L191.9 238.3L191.9 240.2L186.4 242.6L184.9 243.4M195.3 230.4L200.9 227.6L209.2 226.3L219.7 224.2L226.9 227.6L227.3 230.4L224.3 238.1L223.5 242.1M188.9 244.9L191.9 245.6L195.3 242.6L199 236.2L199.6 230.8L200.9 227.6M187.4 247.9L196.6 247.7L197.5 250.7L202.4 252.2L207.7 250.7L208.1 258.7L212.4 258.7L212.4 262L219.9 261.5L223.1 264L221.8 260.5L222 255L226.7 252.7L231.4 255.2M219.7 224.2L226.9 227.6L233.7 226.1L235.9 223.3L233.7 214.7M238.9 204.1L238.2 207.8L233.7 214.7M235.9 223.3L238 225.7L245.5 227.8L250.6 226.8L257.2 224.4L263.6 218L261.5 218L252.9 214.7L252.3 211.5M238.9 204.1L242.3 203.6L247.6 204.5L251.7 208.2M239.9 187L240.1 196.1L238.9 204.1M250.6 226.8L248.7 229.1L248.7 236.8L249.7 238.7M233.7 237.2L241.4 241.5L244.8 245.1M233.7 226.1L235.9 231.5L233.7 233L233.7 237.2L226.3 237.2L224.3 238.1M226.3 237.2L226.9 240.2L223.5 242.1L226.3 244.5L223.9 244.7M247.4 257.6L242.3 259.4L235.7 260M231.4 255.2L232.2 265.3L225.6 267.5L226.1 268.8M235.7 260L234.6 266.1L237.6 269.7L236.3 272.1L231.2 271.2L226.1 268.8M186.4 272.6L191.1 272.8L200.5 272.8L211.1 273.3L215.2 273.7M212.4 258.7L208.1 263.1L208.1 270.1L211.1 273.3M206 274.8L206 283.2L203.9 283.2L203.9 289.7L203.9 298.3L196.4 298.8M203.9 289.7L209.8 291.4L215.6 291.6L218.8 286.9L223.9 283.7L228 284.2L229.5 290.2L231.4 294.5M215.2 273.7L218.8 274.1L223.1 269.7L226.1 268.8M231.2 271.2L231.2 277.5L228 284.2M215.2 273.7L220.3 279.8L223.9 283.7M218.8 301.3L222 298.8L223.9 301.3L220.9 303.7L218.8 301.3M9.1 209.7L5.5 215.4L6.7 219.3L11.9 220.1L17.2 221.8L17.8 229.8L18.5 232.5L12.1 233L13.1 237.7L11.9 244.1L5.5 245.8L3.8 250.7L5.7 254.8L10.8 255.5L10.6 258.7L12.9 258.7M33.2 216.9L30.4 222.3L31.7 224L33.2 224.4L33.6 230.2L35.8 232.5L40.7 231L44.9 230.2L48.8 230.4L50.9 226.3M18.5 232.5L24.7 230.8L23.6 226.3L31.1 225.5L31.7 224M39.2 222.5L37.5 226.6L40.7 231M46 222.7L44.9 230.2M12.9 258.7L21.7 256.1L21.9 260.5L28.9 263.7L32.6 264.6L32.8 270.1L36.8 270.4L37 273L38.3 274.1L37.5 278.7L37.9 283.2L42.4 284.2L42.8 287.9L45.4 288.1L44.7 291.6L46.4 295.4L41.7 298.6L38.3 302.7M12.9 258.7L14.2 262.4L14 268.1L12.9 272.8L15.1 277.5L15.7 282.1L17.8 285.1L15.3 289L15.3 295L11.9 302.2M12.9 272.8L11 274.8M17.8 285.1L23.6 283.7L27.7 283.7L29.4 278.7L37 278.2L37.5 278.7M27.7 283.7L38.3 290.9L36.2 295.7L41.7 295.7L44.7 291.6M0.8 235.3L0.1 239.4L5.5 240L11.9 244.1M-0.9 127.7L8.7 127.4L11.2 124.6L13.6 120L16.6 120.9L16.6 125.2L18.1 127.1M8.2 192.2L8 196.1" fill="none" stroke="#cfaec8" stroke-width="0.5" stroke-linejoin="round"/>
<path d="M265.7 122.8L270 121.2L274.3 121.9L274.3 126.5L271.1 126.5L270 128.9L268.5 129.5L271.1 132.7L273.6 134.8L273.2 137.6L276.2 139L274.3 141.8L275.3 143.8L276 148.7L276.2 150.3L272.1 151.1L268.9 149.2L266.2 148.7L265.5 146L266.4 143.8L266.8 141L266.2 137.6L263.6 134.8L262.5 133.3L262.5 130.4L261 128.6L261.5 125.9ZM285.6 127.4L287.1 123.4L290.3 122.8L292.4 123.7L291.3 127.4L288.1 131.2L286 131ZM318 125.9L319.5 122.8L323.3 121.5L329.7 121.9L329.3 123.4L323.3 123.4L320.1 126.8ZM323.8 135L326.5 134L328.2 134.5L326.5 135.8ZM382.4 106.2L385.2 106.5L389.5 103L393.7 98.4L395.4 92.1L393.7 91.4L391.6 96.6L387.3 101.3L384.1 104.1ZM225.2 74.1L227.3 74.6L231.2 72L230.5 68.5L226.3 67.1L225.2 70.7ZM234.8 69.8L238 69.8L238.4 65.3L235.4 62.1L235.4 66.2ZM187.9 80.4L190.6 80.4L191.1 77.1L188.9 77.1ZM229 236.2L230.5 234.5L233.7 234.5L234.2 237.2L232.7 240.4L229.5 240.6L228.8 238.3ZM223.7 242.4L224.8 244.7L226.9 250.1L227.5 253.7L226.3 253.3L224.1 247.9L223.3 244.1ZM233.7 255.7L235 257.6L235.9 262L236.3 265.9L235 265.7L234.2 260.9L233.5 257.6ZM237.6 225.5L238.6 226.6L239.3 229.6L238.4 229.6ZM251.7 146L254 144.9L253.8 146.5ZM257.4 146.8L258.7 147.6L258.3 149.5L257.4 148.7ZM26.2 51L21.5 44.8L16.1 41.6L17.2 46.9L21.5 52L23.6 54.5ZM23 62.6L19.3 59.3L14.9 56.9L16.1 60.2L20.4 64Z" fill="#aad3df"/>
</svg>
<div class="mk" style="left:301.8px;top:99.1px;background:#ffff00"></div>
<div class="mk" style="left:379.7px;top:109.5px;background:#ff0000"></div>
<div class="mk" style="left:197.7px;top:124.6px;background:#ff0000"></div>
<div class="mk" style="left:187.1px;top:119.3px;background:#00e400"></div>
<div class="mk" style="left:310.8px;top:123.2px;background:#ff0000"></div>
<div class="mk" style="left:314.3px;top:123.2px;background:#ff0000"></div>
<div class="mk" style="left:415.5px;top:127.8px;background:#ffff00"></div>
<div class="mk" style="left:297.6px;top:128.6px;background:#ff7e00"></div>
<div class="mk" style="left:399.6px;top:133.1px;background:#00e400"></div>
<div class="mk" style="left:297.6px;top:136.9px;background:#ffff00"></div>
<div class="mk" style="left:275.8px;top:137.9px;background:#00e400"></div>
<div class="mk" style="left:157.5px;top:140.8px;background:#969696"></div>
<div class="mk" style="left:313.7px;top:151.1px;background:#741262"></div>
<div class="mk" style="left:310.3px;top:154.2px;background:#7e0023"></div>
<div class="mk" style="left:303.9px;top:148.4px;background:#ff0000"></div>
<div class="mk" style="left:245.7px;top:149.8px;background:#ff0000"></div>
<div class="mk" style="left:228.1px;top:153.7px;background:#969696"></div>
<div class="mk" style="left:410.7px;top:156.1px;background:#ffff00"></div>
<div class="mk" style="left:253.4px;top:159.4px;background:#ffff00"></div>
<div class="mk" style="left:315.8px;top:161.9px;background:#a0146e"></div>
<div class="mk" style="left:333.2px;top:163.3px;background:#ff7e00"></div>
<div class="mk" style="left:258.6px;top:166.6px;background:#969696"></div>
<div class="mk" style="left:266.8px;top:171.9px;background:#00e400"></div>
<div class="mk" style="left:250.8px;top:170.0px;background:#ffff00"></div>
<div class="mk" style="left:268.9px;top:170.0px;background:#c8f020"></div>
<div class="mk" style="left:294.3px;top:170.6px;background:#969696"></div>
<div class="mk" style="left:344.8px;top:172.9px;background:#ff0000"></div>
<div class="mk" style="left:392.9px;top:174.6px;background:#969696"></div>
<div class="mk" style="left:338.6px;top:175.2px;background:#ff0000"></div>
<div class="mk" style="left:235.3px;top:177.7px;background:#969696"></div>
<div class="mk" style="left:377.0px;top:179.4px;background:#ff0000"></div>
<div class="mk" style="left:304.9px;top:184.3px;background:#ffff00"></div>
<div class="mk" style="left:369.7px;top:186.1px;background:#ffff00"></div>
<div class="mk" style="left:318.6px;top:187.1px;background:#ff0000"></div>
<div class="mk" style="left:356.9px;top:188.9px;background:#ff7e00"></div>
<div class="mk" style="left:221.1px;top:191.2px;background:#969696"></div>
<div class="mk" style="left:323.1px;top:197.6px;background:#ff7e00"></div>
<div class="mk" style="left:134.0px;top:198.9px;background:#ff0000"></div>
<div class="mk" style="left:4.3px;top:199.6px;background:#969696"></div>
<div class="mk" style="left:184.0px;top:199.7px;background:#ff0000"></div>
<div class="mk" style="left:378.8px;top:202.6px;background:#ffff00"></div>
<div class="mk" style="left:121.4px;top:204.4px;background:#969696"></div>
<div class="mk" style="left:234.6px;top:205.4px;background:#c8f020"></div>
<div class="mk" style="left:167.2px;top:205.5px;background:#ffff00"></div>
<div class="mk" style="left:321.7px;top:210.4px;background:#969696"></div>
<div class="mk" style="left:158.3px;top:212.1px;background:#969696"></div>
<div class="mk" style="left:142.4px;top:213.7px;background:#ff0000"></div>
<div class="mk" style="left:150.8px;top:214.8px;background:#ff0000"></div>
<div class="mk" style="left:-6.7px;top:215.9px;background:#ffff00"></div>
<div class="mk" style="left:171.6px;top:225.1px;background:#ffff00"></div>
<div class="mk" style="left:219.8px;top:225.6px;background:#ff7e00"></div>
<div class="mk" style="left:230.2px;top:227.9px;background:#00e400"></div>
<div class="mk" style="left:378.3px;top:237.9px;background:#ffff00"></div>
<div class="mk" style="left:-13.7px;top:252.6px;background:#969696"></div>
<div class="mk" style="left:252.9px;top:266.9px;background:#00e400"></div>
<div class="ml" style="left:370.1px;top:108.3px">164</div>
<div class="ml" style="left:188.1px;top:123.4px">164</div>
<div class="ml" style="left:179.7px;top:118.1px">241</div>
<div class="ml" style="left:295.6px;top:122.0px">1</div>
<div class="ml" style="left:304.7px;top:122.0px">151</div>
<div class="ml" style="left:405.9px;top:126.6px">61</div>
<div class="ml" style="left:288.0px;top:127.4px">111</div>
<div class="ml" style="left:390.0px;top:131.9px">43</div>
<div class="ml" style="left:288.0px;top:135.7px">84</div>
<div class="ml" style="left:266.2px;top:136.7px">40</div>
<div class="ml" style="left:147.9px;top:139.6px">N/A</div>
<div class="ml" style="left:306.0px;top:149.9px">24</div>
<div class="ml" style="left:300.7px;top:153.0px">351</div>
<div class="ml" style="left:294.3px;top:147.2px">152</div>
<div class="ml" style="left:236.1px;top:148.6px">172</div>
<div class="ml" style="left:218.5px;top:152.5px">N/A</div>
<div class="ml" style="left:401.1px;top:154.9px">86</div>
<div class="ml" style="left:243.8px;top:158.2px">78</div>
<div class="ml" style="left:306.2px;top:160.7px">214</div>
<div class="ml" style="left:323.6px;top:162.1px">103</div>
<div class="ml" style="left:249.0px;top:165.4px">N/A</div>
<div class="ml" style="left:241.2px;top:168.8px">96</div>
<div class="ml" style="left:259.3px;top:168.8px">52</div>
<div class="ml" style="left:284.7px;top:169.4px">N/A</div>
<div class="ml" style="left:339.7px;top:171.7px">05</div>
<div class="ml" style="left:383.3px;top:173.4px">N/A</div>
<div class="ml" style="left:329.0px;top:174.0px">170</div>
<div class="ml" style="left:225.7px;top:176.5px">N/A</div>
<div class="ml" style="left:367.4px;top:178.2px">176</div>
<div class="ml" style="left:295.3px;top:183.1px">78</div>
<div class="ml" style="left:360.1px;top:184.9px">81</div>
<div class="ml" style="left:309.0px;top:185.9px">157</div>
<div class="ml" style="left:347.3px;top:187.7px">113</div>
<div class="ml" style="left:211.5px;top:190.0px">N/A</div>
<div class="ml" style="left:313.5px;top:196.4px">115</div>
<div class="ml" style="left:124.4px;top:197.7px">157</div>
<div class="ml" style="left:-5.3px;top:198.4px">N/A</div>
<div class="ml" style="left:174.4px;top:198.5px">153</div>
<div class="ml" style="left:369.2px;top:201.4px">79</div>
<div class="ml" style="left:111.8px;top:203.2px">N/A</div>
<div class="ml" style="left:225.0px;top:204.2px">58</div>
<div class="ml" style="left:157.6px;top:204.3px">52</div>
<div class="ml" style="left:312.1px;top:209.2px">N/A</div>
<div class="ml" style="left:148.7px;top:210.9px">N/A</div>
<div class="ml" style="left:132.8px;top:212.5px">161</div>
<div class="ml" style="left:141.2px;top:213.6px">1</div>
<div class="ml" style="left:-16.3px;top:214.7px">68</div>
<div class="ml" style="left:162.0px;top:223.9px">80</div>
<div class="ml" style="left:210.2px;top:224.4px">113</div>
<div class="ml" style="left:220.6px;top:226.7px">36</div>
<div class="ml" style="left:368.7px;top:236.7px">90</div>
<div class="ml" style="left:-23.3px;top:251.4px">N/A</div>
<div class="ml" style="left:243.3px;top:265.7px">27</div>
<div id="tip" class="abs"></div>
<div id="pop" class="abs">Bishkek<br>2021-12-24 6:00 PM<br>(LT)</div>
<div id="ptab" class="abs">
<div style="left:0;top:0;width:96px;height:21.5px;background:#064983"></div>
<div style="left:0;top:0;width:61px;color:#fff;font-weight:bold">Pollutant</div>
<div style="left:61px;top:0;width:35px;color:#fff;font-weight:bold">AQI</div>
<div style="left:0;top:21.5px;width:61px;height:22.5px;color:#333;line-height:23px">PM2.5</div>
<div style="left:61px;top:21.5px;width:35px;height:22.5px;background:#ff0000;color:#fff;font-weight:bold;line-height:23px">156</div>
</div>
</div></div>

<div class="bar abs" style="top:1px">Select a City</div>
<div class="sel abs" style="top:29px">Bishkek<svg class="x" viewBox="0 0 6.4 6.8"><path d="M0.3 0.2L6.1 6.6M6.1 0.2L0.3 6.6" stroke="#8c8c8c" stroke-width="0.95" fill="none"/></svg><span class="ar"></span></div>
<div class="bar abs" style="top:72px">Select a Parameter</div>
<div class="sel abs" style="top:100px">PM2.5<svg class="x" viewBox="0 0 6.4 6.8"><path d="M0.3 0.2L6.1 6.6M6.1 0.2L0.3 6.6" stroke="#8c8c8c" stroke-width="0.95" fill="none"/></svg><span class="ar"></span></div>
<div id="city" class="abs">Bishkek</div>
<svg id="rss" class="abs" viewBox="0 0 26 26"><rect width="26" height="26" fill="#f0b33c"/><circle cx="5.4" cy="19.9" r="2.6" fill="#fff"/><path d="M2.9 10.9 A11.4 11.4 0 0 1 14.3 22.3" fill="none" stroke="#fff" stroke-width="3.7"/><path d="M2.9 4.7 A17.6 17.6 0 0 1 20.5 22.3" fill="none" stroke="#fff" stroke-width="3.5"/></svg>
<div id="note" class="abs">Note: Values above 500 are considered Beyond the AQI. Follow<br>recommendations for the Hazardous category. Additional<br>information on reducing exposure to extremely high levels of particle<br>pollution is available <a>here</a>.</div>

<div id="t1" class="tab abs">AQI</div>
<div id="t2" class="tab abs">Concentration</div>
<div id="t3" class="tab abs">Historical</div>
<div id="tline" class="abs"></div>
<div id="learn" class="abs">Learn more about how the Air Quality Index [AQI] is calculated from the EPA <a>here</a>.</div>

<div id="chart" class="abs">
<svg class="abs" style="left:-1px;top:-1px" width="598" height="244" viewBox="0 0 598 244" font-family="DejaVu Sans, Verdana, sans-serif">
<rect x="56.5" y="156.3" width="533" height="1" fill="#e8e8e8"/>
<rect x="56.5" y="128.9" width="533" height="1" fill="#e8e8e8"/>
<rect x="56.5" y="101.4" width="533" height="1" fill="#e8e8e8"/>
<rect x="56.5" y="74.0" width="533" height="1" fill="#e8e8e8"/>
<rect x="56.5" y="46.5" width="533" height="1" fill="#e8e8e8"/>
<rect x="56.5" y="183.8" width="533" height="1" fill="#c9d3e4"/>
<rect x="56.8" y="184.3" width="1" height="5.5" fill="#c9d3e4"/>
<rect x="79.0" y="184.3" width="1" height="5.5" fill="#c9d3e4"/>
<rect x="101.1" y="184.3" width="1" height="5.5" fill="#c9d3e4"/>
<rect x="123.3" y="184.3" width="1" height="5.5" fill="#c9d3e4"/>
<rect x="145.5" y="184.3" width="1" height="5.5" fill="#c9d3e4"/>
<rect x="167.6" y="184.3" width="1" height="5.5" fill="#c9d3e4"/>
<rect x="189.8" y="184.3" width="1" height="5.5" fill="#c9d3e4"/>
<rect x="212.0" y="184.3" width="1" height="5.5" fill="#c9d3e4"/>
<rect x="234.1" y="184.3" width="1" height="5.5" fill="#c9d3e4"/>
<rect x="256.3" y="184.3" width="1" height="5.5" fill="#c9d3e4"/>
<rect x="278.5" y="184.3" width="1" height="5.5" fill="#c9d3e4"/>
<rect x="300.6" y="184.3" width="1" height="5.5" fill="#c9d3e4"/>
<rect x="322.8" y="184.3" width="1" height="5.5" fill="#c9d3e4"/>
<rect x="345.0" y="184.3" width="1" height="5.5" fill="#c9d3e4"/>
<rect x="367.1" y="184.3" width="1" height="5.5" fill="#c9d3e4"/>
<rect x="389.3" y="184.3" width="1" height="5.5" fill="#c9d3e4"/>
<rect x="411.5" y="184.3" width="1" height="5.5" fill="#c9d3e4"/>
<rect x="433.6" y="184.3" width="1" height="5.5" fill="#c9d3e4"/>
<rect x="455.8" y="184.3" width="1" height="5.5" fill="#c9d3e4"/>
<rect x="478.0" y="184.3" width="1" height="5.5" fill="#c9d3e4"/>
<rect x="500.1" y="184.3" width="1" height="5.5" fill="#c9d3e4"/>
<rect x="522.3" y="184.3" width="1" height="5.5" fill="#c9d3e4"/>
<rect x="544.5" y="184.3" width="1" height="5.5" fill="#c9d3e4"/>
<rect x="566.6" y="184.3" width="1" height="5.5" fill="#c9d3e4"/>
<rect x="588.8" y="184.3" width="1" height="5.5" fill="#c9d3e4"/>
<rect x="62.6" y="151.4" width="11.6" height="32.9" fill="#ff7e00" stroke="#3a3a3a" stroke-width="0.8"/>
<rect x="84.8" y="153.6" width="11.6" height="30.7" fill="#ff7e00" stroke="#3a3a3a" stroke-width="0.8"/>
<rect x="106.9" y="156.6" width="11.6" height="27.7" fill="#ff7e00" stroke="#3a3a3a" stroke-width="0.8"/>
<rect x="129.1" y="154.1" width="11.6" height="30.2" fill="#ff7e00" stroke="#3a3a3a" stroke-width="0.8"/>
<rect x="151.3" y="148.9" width="11.6" height="35.4" fill="#ff7e00" stroke="#3a3a3a" stroke-width="0.8"/>
<rect x="173.4" y="142.9" width="11.6" height="41.4" fill="#ff0000" stroke="#3a3a3a" stroke-width="0.8"/>
<rect x="195.6" y="142.9" width="11.6" height="41.4" fill="#ff0000" stroke="#3a3a3a" stroke-width="0.8"/>
<rect x="217.8" y="148.9" width="11.6" height="35.4" fill="#ff7e00" stroke="#3a3a3a" stroke-width="0.8"/>
<rect x="239.9" y="149.7" width="11.6" height="34.6" fill="#ff7e00" stroke="#3a3a3a" stroke-width="0.8"/>
<rect x="262.1" y="151.6" width="11.6" height="32.7" fill="#ff7e00" stroke="#3a3a3a" stroke-width="0.8"/>
<rect x="284.3" y="164.0" width="11.6" height="20.3" fill="#ffff00" stroke="#3a3a3a" stroke-width="0.8"/>
<rect x="306.4" y="170.0" width="11.6" height="14.3" fill="#ffff00" stroke="#3a3a3a" stroke-width="0.8"/>
<rect x="328.6" y="178.3" width="11.6" height="6.0" fill="#00e400" stroke="#3a3a3a" stroke-width="0.8"/>
<rect x="350.7" y="176.3" width="11.6" height="8.0" fill="#00e400" stroke="#3a3a3a" stroke-width="0.8"/>
<rect x="372.9" y="177.2" width="11.6" height="7.1" fill="#00e400" stroke="#3a3a3a" stroke-width="0.8"/>
<rect x="395.1" y="176.3" width="11.6" height="8.0" fill="#00e400" stroke="#3a3a3a" stroke-width="0.8"/>
<rect x="417.2" y="173.3" width="11.6" height="11.0" fill="#00e400" stroke="#3a3a3a" stroke-width="0.8"/>
<rect x="439.4" y="171.1" width="11.6" height="13.2" fill="#00e400" stroke="#3a3a3a" stroke-width="0.8"/>
<rect x="461.6" y="170.3" width="11.6" height="14.0" fill="#ffff00" stroke="#3a3a3a" stroke-width="0.8"/>
<rect x="483.7" y="170.0" width="11.6" height="14.3" fill="#ffff00" stroke="#3a3a3a" stroke-width="0.8"/>
<rect x="505.9" y="167.8" width="11.6" height="16.5" fill="#ffff00" stroke="#3a3a3a" stroke-width="0.8"/>
<rect x="528.1" y="158.8" width="11.6" height="25.5" fill="#ffff00" stroke="#3a3a3a" stroke-width="0.8"/>
<rect x="550.2" y="142.9" width="11.6" height="41.4" fill="#ff0000" stroke="#3a3a3a" stroke-width="0.8"/>
<rect x="572.4" y="141.5" width="11.6" height="42.8" fill="#ff0000" stroke="#3a3a3a" stroke-width="0.8"/>
<text x="46.5" y="187.5" font-size="8.6" text-anchor="end" fill="#333">0</text>
<text x="46.5" y="160.0" font-size="8.6" text-anchor="end" fill="#333">100</text>
<text x="46.5" y="132.6" font-size="8.6" text-anchor="end" fill="#333">200</text>
<text x="46.5" y="105.1" font-size="8.6" text-anchor="end" fill="#333">300</text>
<text x="46.5" y="77.7" font-size="8.6" text-anchor="end" fill="#333">400</text>
<text x="46.5" y="50.2" font-size="8.6" text-anchor="end" fill="#333">500</text>
<text transform="translate(71.9 194.3) rotate(-45)" font-size="8.6" text-anchor="end" fill="#666">7 PM</text>
<text transform="translate(94.1 194.3) rotate(-45)" font-size="8.6" text-anchor="end" fill="#666">8 PM</text>
<text transform="translate(116.2 194.3) rotate(-45)" font-size="8.6" text-anchor="end" fill="#666">9 PM</text>
<text transform="translate(138.4 194.3) rotate(-45)" font-size="8.6" text-anchor="end" fill="#666">10 PM</text>
<text transform="translate(160.6 194.3) rotate(-45)" font-size="8.6" text-anchor="end" fill="#666">11 PM</text>
<text transform="translate(182.7 194.3) rotate(-45)" font-size="8.6" text-anchor="end" fill="#666">Dec 24, 2021 12 AM</text>
<text transform="translate(204.9 194.3) rotate(-45)" font-size="8.6" text-anchor="end" fill="#666">1 AM</text>
<text transform="translate(227.1 194.3) rotate(-45)" font-size="8.6" text-anchor="end" fill="#666">2 AM</text>
<text transform="translate(249.2 194.3) rotate(-45)" font-size="8.6" text-anchor="end" fill="#666">3 AM</text>
<text transform="translate(271.4 194.3) rotate(-45)" font-size="8.6" text-anchor="end" fill="#666">4 AM</text>
<text transform="translate(293.6 194.3) rotate(-45)" font-size="8.6" text-anchor="end" fill="#666">5 AM</text>
<text transform="translate(315.7 194.3) rotate(-45)" font-size="8.6" text-anchor="end" fill="#666">6 AM</text>
<text transform="translate(337.9 194.3) rotate(-45)" font-size="8.6" text-anchor="end" fill="#666">7 AM</text>
<text transform="translate(360.0 194.3) rotate(-45)" font-size="8.6" text-anchor="end" fill="#666">8 AM</text>
<text transform="translate(382.2 194.3) rotate(-45)" font-size="8.6" text-anchor="end" fill="#666">9 AM</text>
<text transform="translate(404.4 194.3) rotate(-45)" font-size="8.6" text-anchor="end" fill="#666">10 AM</text>
<text transform="translate(426.5 194.3) rotate(-45)" font-size="8.6" text-anchor="end" fill="#666">11 AM</text>
<text transform="translate(448.7 194.3) rotate(-45)" font-size="8.6" text-anchor="end" fill="#666">12 PM</text>
<text transform="translate(470.9 194.3) rotate(-45)" font-size="8.6" text-anchor="end" fill="#666">1 PM</text>
<text transform="translate(493.0 194.3) rotate(-45)" font-size="8.6" text-anchor="end" fill="#666">2 PM</text>
<text transform="translate(515.2 194.3) rotate(-45)" font-size="8.6" text-anchor="end" fill="#666">3 PM</text>
<text transform="translate(537.4 194.3) rotate(-45)" font-size="8.6" text-anchor="end" fill="#666">4 PM</text>
<text transform="translate(559.5 194.3) rotate(-45)" font-size="8.6" text-anchor="end" fill="#666">5 PM</text>
<text transform="translate(581.7 194.3) rotate(-45)" font-size="8.6" text-anchor="end" fill="#666">6 PM</text>
<text transform="translate(23.5 114) rotate(-90)" font-size="9.2" text-anchor="middle" fill="#222">AQI</text>
<text x="299" y="19" font-size="13.3" text-anchor="middle" fill="#333">Bishkek – PM2.5</text>
</svg>
</div>

<div id="cc" class="abs">
<div class="h">Current Conditions<br><span style="font-size:9px;position:relative;top:1px">observed at</span><br>Dec 24, 2021 6:00 PM (LT)</div>
<div class="r">156 AQI<br>Unhealthy<br>PM2.5</div>
<div class="hm">Health Message</div>
<div class="tx">Everyone may begin to experience health<br>effects when AQI values are between 151<br>and 200. Members of sensitive groups may<br>experience more serious health effects.</div>
</div>
</body>
</html>
